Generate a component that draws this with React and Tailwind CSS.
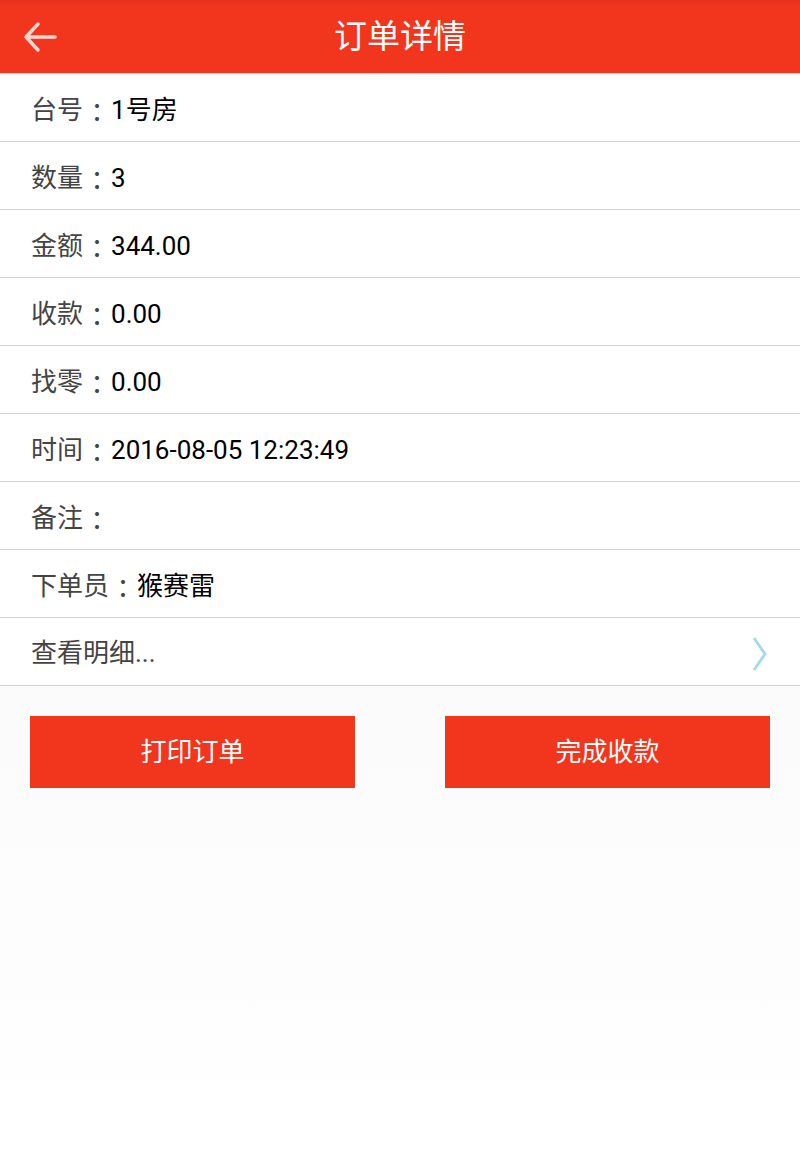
export default function App() {
  const rows = [
    ["台号", "1号房"],
    ["数量", "3"],
    ["金额", "344.00"],
    ["收款", "0.00"],
    ["找零", "0.00"],
    ["时间", "2016-08-05 12:23:49"],
    ["备注", ""],
    ["下单员", "猴赛雷"],
  ];
  const font = { fontFamily: '"Roboto", "Noto Sans CJK SC", sans-serif' };
  const colon = { fontFamily: '"Noto Sans CJK TC", sans-serif' };
  return (
    <div className="w-[800px] h-[1150px] flex flex-col bg-gradient-to-b from-[#f4f4f4] to-white" style={font}>
      <div className="h-[73px] bg-gradient-to-b from-[#e8301c] to-[#f2361e] to-[12%] flex items-center relative shrink-0">
        <svg className="absolute left-[22px] top-[21px]" width="36" height="32" viewBox="0 0 36 32">
          <path d="M4 16 H33 M16 3 L4 16 L16 29" stroke="#fcd6d0" strokeWidth="3.5" fill="none" strokeLinecap="round" strokeLinejoin="round" />
        </svg>
        <div className="w-full text-center text-white text-[33px] leading-none">订单详情</div>
      </div>
      <div className="h-px bg-[#d6dde0] shrink-0" />
      <div className="bg-white">
        {rows.map(([k, v], i) => (
          <div key={i} className="h-[68px] border-b border-[#c6dbe1] flex items-center pl-[31px] pt-[5px] text-[26px]">
            <span className="text-[#444]">{k}</span>
            <span className="text-[#444] px-[1px]" style={colon}>：</span>
            <span className="text-black">{v}</span>
          </div>
        ))}
        <div className="h-[68px] border-b border-[#c6dbe1] flex items-center pl-[31px] pr-[32px] pt-[4px] text-[26px] justify-between">
          <span className="text-[#444]">查看明细...</span>
          <svg width="16" height="36" viewBox="0 0 16 36">
            <path d="M2 2 L13 18 L2 34" stroke="#a6dbe5" strokeWidth="3" fill="none" />
          </svg>
        </div>
      </div>
      <div className="flex justify-between px-[30px] pt-[30px]">
        <button className="w-[325px] h-[72px] bg-[#f2361e] text-white text-[26px]">打印订单</button>
        <button className="w-[325px] h-[72px] bg-[#f2361e] text-white text-[26px]">完成收款</button>
      </div>
    </div>
  );
}
